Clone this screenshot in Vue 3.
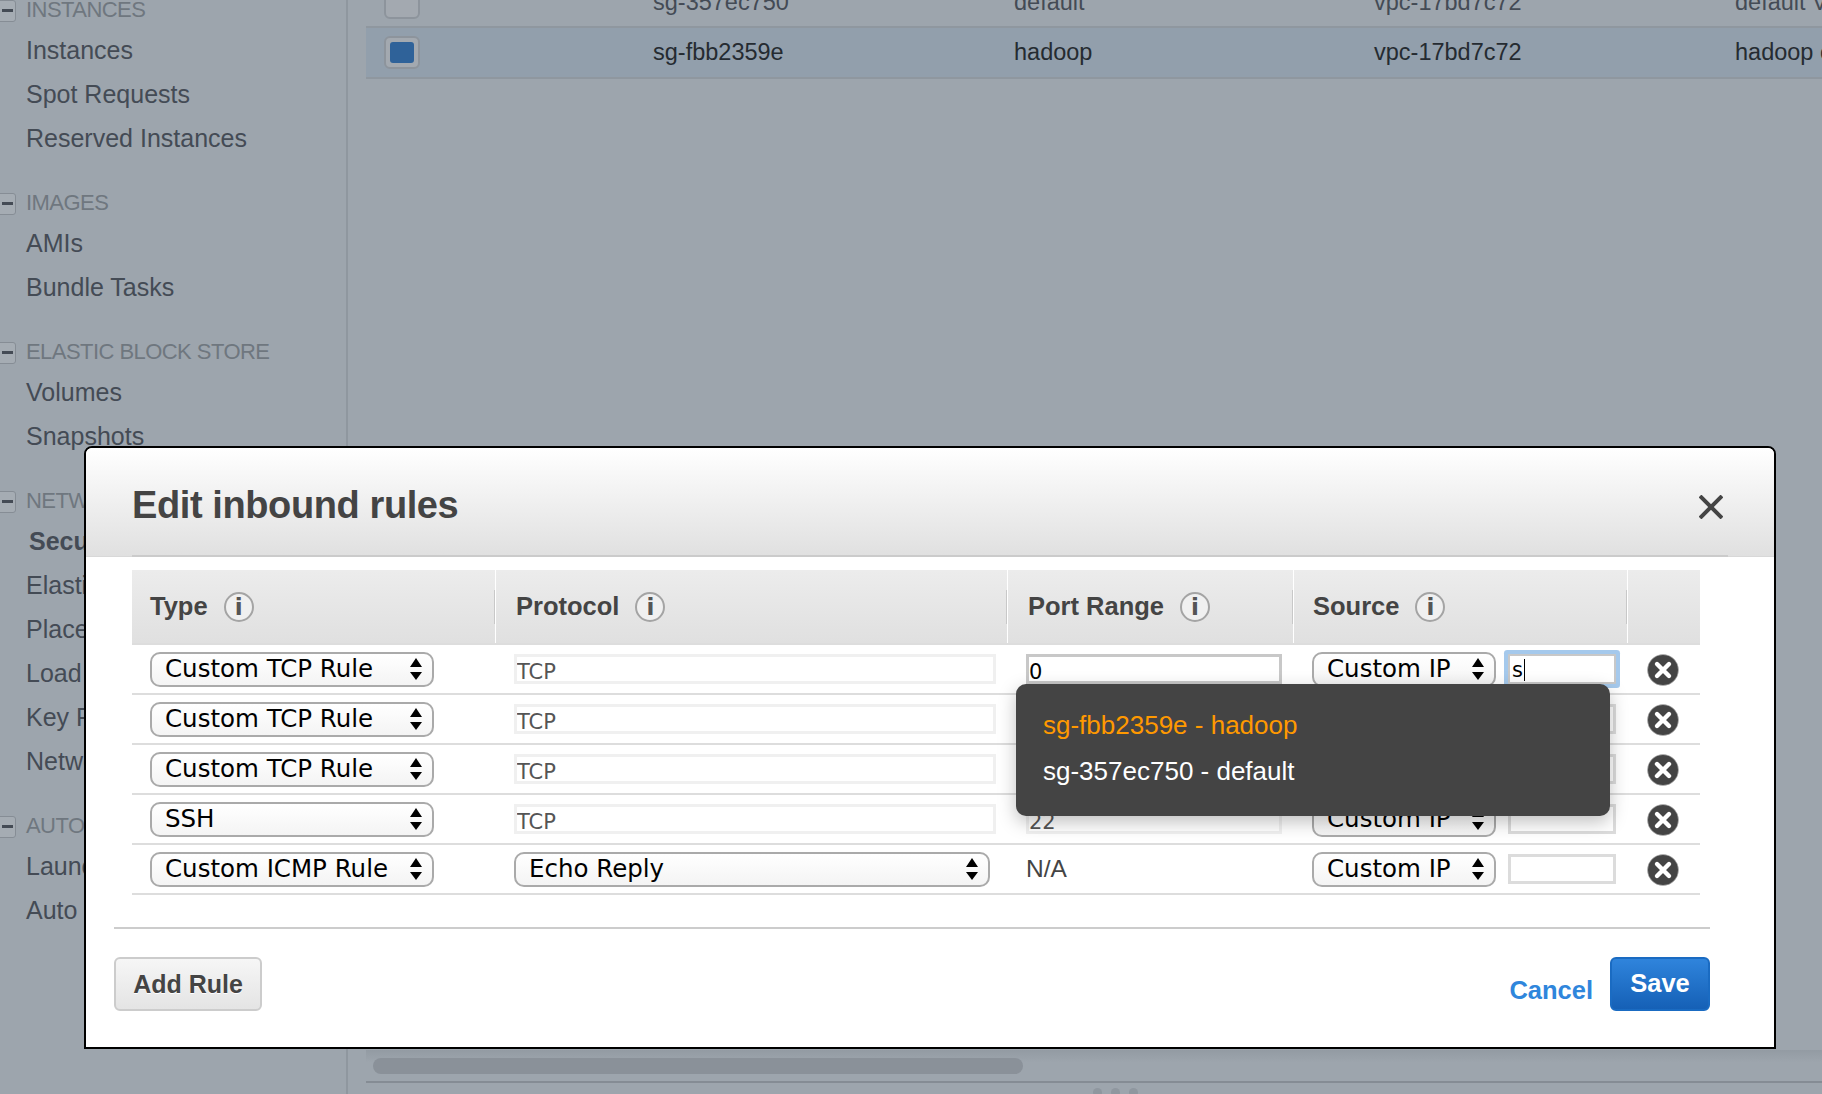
<template>
  <div class="page">
    <aside class="nav">
      <section v-for="group in navGroups" :key="group.title" class="nav-group">
        <h4 class="nav-title"><span class="collapse"></span>{{ group.title }}</h4>
        <a v-for="item in group.items" :key="item" class="nav-item" :class="{ current: item === 'Security Groups' }">{{ item }}</a>
      </section>
    </aside>

    <main class="content">
      <div class="list-row">
        <span class="check"></span>
        <span>sg-357ec750</span><span>default</span><span>vpc-17bd7c72</span><span>default VPC security group</span>
      </div>
      <div class="list-row selected">
        <span class="check"><i></i></span>
        <span>sg-fbb2359e</span><span>hadoop</span><span>vpc-17bd7c72</span><span>hadoop cluster</span>
      </div>
      <div class="scrollbar"><div class="thumb"></div></div>
      <div class="grip"><i></i><i></i><i></i></div>
    </main>

    <div class="modal">
      <header class="modal-head">
        <h2>Edit inbound rules</h2>
        <svg class="close" width="24" height="24" viewBox="0 0 24 24"><path d="M1 1 23 23M23 1 1 23" stroke="#444" stroke-width="4" fill="none" /></svg>
      </header>

      <div class="rules">
        <div class="rule-head">
          <div v-for="col in columns" :key="col" class="th">
            <template v-if="col">
              <span>{{ col }}</span>
              <span class="info">i</span>
            </template>
          </div>
        </div>

        <div v-for="(rule, i) in rules" :key="i" class="rule-row">
          <div class="td">
            <div class="select type">
              <span>{{ rule.type }}</span>
              <svg class="arrows" width="12" height="24" viewBox="0 0 12 24"><path d="M6 1 12 10H0ZM0 15H12L6 23Z" /></svg>
            </div>
          </div>
          <div class="td">
            <div v-if="rule.code" class="select code">
              <span>{{ rule.code }}</span>
              <svg class="arrows" width="12" height="24" viewBox="0 0 12 24"><path d="M6 1 12 10H0ZM0 15H12L6 23Z" /></svg>
            </div>
            <input v-else class="field protocol" :value="rule.protocol" readonly>
          </div>
          <div class="td">
            <span v-if="rule.code" class="plain">N/A</span>
            <input v-else class="field port" :class="{ live: i === 0 }" :value="rule.port" readonly>
          </div>
          <div class="td source">
            <div class="select ip">
              <span>Custom IP</span>
              <svg class="arrows" width="12" height="24" viewBox="0 0 12 24"><path d="M6 1 12 10H0ZM0 15H12L6 23Z" /></svg>
            </div>
            <div v-if="i === 0" class="field cidr focused">s<b class="caret"></b></div>
            <input v-else class="field cidr" readonly>
          </div>
          <div class="td remove">
            <svg width="32" height="32" viewBox="0 0 32 32">
              <circle cx="16" cy="16" r="15.5" fill="#444" stroke="#bbb" stroke-width="0.6" />
              <path d="M10 10 22 22M22 10 10 22" stroke="#fff" stroke-width="4.4" stroke-linecap="round" />
            </svg>
          </div>
        </div>
      </div>

      <footer class="modal-foot">
        <button class="btn add">Add Rule</button>
        <a class="cancel">Cancel</a>
        <button class="btn save">Save</button>
      </footer>

      <ul class="suggest">
        <li class="hit">sg-fbb2359e - hadoop</li>
        <li>sg-357ec750 - default</li>
      </ul>
    </div>
  </div>
</template>

<script setup>
const navGroups = [
  { title: 'INSTANCES', items: ['Instances', 'Spot Requests', 'Reserved Instances'] },
  { title: 'IMAGES', items: ['AMIs', 'Bundle Tasks'] },
  { title: 'ELASTIC BLOCK STORE', items: ['Volumes', 'Snapshots'] },
  { title: 'NETWORK & SECURITY', items: ['Security Groups', 'Elastic IPs', 'Placement Groups', 'Load Balancers', 'Key Pairs', 'Network Interfaces'] },
  { title: 'AUTO SCALING', items: ['Launch Configurations', 'Auto Scaling Groups'] }
]

const columns = ['Type', 'Protocol', 'Port Range', 'Source', '']

const rules = [
  { type: 'Custom TCP Rule', protocol: 'TCP', port: '0' },
  { type: 'Custom TCP Rule', protocol: 'TCP', port: '' },
  { type: 'Custom TCP Rule', protocol: 'TCP', port: '' },
  { type: 'SSH', protocol: 'TCP', port: '22' },
  { type: 'Custom ICMP Rule', code: 'Echo Reply' }
]
</script>

<style>
html, body {
  margin: 0;
  background: #9da5ad;
  overflow: hidden;
}
</style>

<style scoped>
.page {
  position: relative;
  display: flex;
  width: 1822px;
  height: 1094px;
  overflow: hidden;
  background: #9da5ad;
  font-family: "Liberation Sans", Arial, sans-serif;
  color: #444b55;
}

/* sidebar */
.nav {
  flex: 0 0 348px;
  height: 1098px;
  margin-top: -4px;
  border-right: 2px solid #8f979f;
  box-sizing: border-box;
}
.nav-group {
  margin-bottom: 30px;
}
.nav-title {
  position: relative;
  height: 28px;
  line-height: 28px;
  margin: 0 0 3px;
  padding-left: 26px;
  font-size: 22px;
  font-weight: 400;
  letter-spacing: -0.55px;
  color: #6f777f;
}
.collapse {
  position: absolute;
  left: -8px;
  top: 4px;
  width: 22px;
  height: 20px;
  border: 1px solid #868d95;
  border-radius: 3px;
  background: #a5acb3;
}
.collapse::after {
  content: "";
  position: absolute;
  left: 9px;
  right: 2px;
  top: 8px;
  height: 3px;
  background: #444b55;
}
.nav-item {
  display: block;
  height: 44px;
  line-height: 46px;
  padding-left: 26px;
  font-size: 25px;
  white-space: nowrap;
}
.nav-item.current {
  padding-left: 29px;
  font-weight: 700;
}

/* list behind the dialog */
.content {
  flex: 1;
  min-width: 0;
  margin-top: -22px;
  padding-left: 18px;
  display: flex;
  flex-direction: column;
}
.list-row {
  display: grid;
  grid-template-columns: 287px 361px 360px 361px 1fr;
  align-items: center;
  height: 50px;
  box-sizing: border-box;
  border-bottom: 2px solid #8f979f;
  font-size: 23.5px;
  color: #444b55;
  white-space: nowrap;
}
.list-row.selected {
  height: 51px;
  background: #929fac;
  color: #252b31;
}
.check {
  position: relative;
  width: 36px;
  height: 33px;
  margin-left: 18px;
  box-sizing: border-box;
  border: 2px solid #8d949c;
  border-radius: 6px;
  background: #a3a9b0;
}
.check i {
  position: absolute;
  left: 4px;
  top: 4px;
  width: 24px;
  height: 21px;
  border-radius: 3px;
  background: #2f6299;
}
.scrollbar {
  margin-top: auto;
  height: 33px;
  padding-top: 8px;
  box-sizing: border-box;
  background: linear-gradient(#939ba3, #9da5ad 40%);
  border-bottom: 2px solid #858c94;
  margin-bottom: 5px;
}
.thumb {
  width: 650px;
  height: 16px;
  margin-left: 7px;
  border-radius: 8px;
  background: #8a9199;
}
.grip {
  display: flex;
  gap: 9px;
  justify-content: center;
  padding-left: 42px;
  margin-bottom: -3px;
}
.grip i {
  flex: none;
  width: 9px;
  height: 9px;
  border-radius: 50%;
  background: #8f979f;
}

/* dialog */
.modal {
  position: absolute;
  left: 84px;
  top: 446px;
  width: 1692px;
  height: 603px;
  box-sizing: border-box;
  border: 2px solid #000;
  border-radius: 8px 8px 0 0;
  background: #fff;
  color: #444;
}
.modal-head {
  position: relative;
  display: flex;
  align-items: center;
  justify-content: space-between;
  height: 109px;
  box-sizing: border-box;
  padding: 6px 51px 0 46px;
  border-radius: 6px 6px 0 0;
  background: linear-gradient(#fff, #e0e0e0);
  border-bottom: 1px solid #d8d8d8;
}
.modal-head::after {
  content: "";
  position: absolute;
  left: 46px;
  right: 46px;
  bottom: -1px;
  height: 2px;
  background: #cbcbcb;
}
.modal-head h2 {
  margin: 0;
  font-size: 38px;
  font-weight: 700;
  letter-spacing: -0.4px;
}
.close {
  margin-top: 4px;
}

.rules {
  margin: 13px 0 0 46px;
  width: 1568px;
}
.rule-head,
.rule-row {
  display: grid;
  grid-template-columns: 363px 512px 286px 334px 73px;
}
.rule-head {
  height: 73px;
  background: linear-gradient(#ececec, #e0e0e0);
  border-bottom: 2px solid #fff;
}
.th {
  position: relative;
  display: flex;
  align-items: center;
  gap: 16px;
  padding-left: 18px;
  font-size: 25.5px;
  font-weight: 700;
  border-left: 1px solid #fff;
}
.th:first-child {
  border-left: 0;
}
.th + .th::before {
  content: "";
  position: absolute;
  left: -2px;
  top: 20px;
  height: 34px;
  width: 1px;
  background: #c8c8c8;
}
.th + .th {
  padding-left: 20px;
}
.th:nth-child(4) {
  padding-left: 19px;
}
.info {
  flex: none;
  width: 30px;
  height: 30px;
  box-sizing: border-box;
  border: 2px solid #a4a4a4;
  border-radius: 50%;
  background: #f0f0f0;
  text-align: center;
  line-height: 26px;
  font-size: 23px;
  font-weight: 700;
  font-family: "DejaVu Sans", sans-serif;
  color: #555;
}
.rule-row {
  height: 50px;
  box-sizing: border-box;
  border-bottom: 2px solid #ddd;
}
.rule-head + .rule-row {
  box-shadow: 0 -2px 0 #ddd;
}
.td {
  display: flex;
  align-items: center;
  padding-left: 18px;
}
.td + .td {
  padding-left: 19px;
}
.td.source {
  padding-left: 19px;
  gap: 12px;
}
.td.remove {
  padding-left: 20px;
  padding-top: 2px;
}

.select {
  display: flex;
  align-items: center;
  justify-content: space-between;
  height: 35px;
  box-sizing: border-box;
  padding: 0 10px 2px 13px;
  border: 2px solid #aaa;
  border-radius: 10px;
  background: linear-gradient(#fff, #f4f4f4);
  font-family: "DejaVu Sans", sans-serif;
  font-size: 24.5px;
  color: #000;
  white-space: nowrap;
}
.select.type { width: 284px; }
.select.code { width: 476px; }
.select.ip { width: 184px; }
.arrows {
  flex: none;
  margin-top: 2px;
  fill: #000;
}
.field {
  height: 30px;
  box-sizing: border-box;
  padding: 6px 0 0 0;
  border: 3px solid #f0f0f0;
  outline: none;
  border-radius: 0;
  background: #fff;
  font-family: "DejaVu Sans", sans-serif;
  font-size: 21px;
  color: #555;
}
.field.protocol { width: 482px; }
.field.port { width: 256px; }
.field.port.live {
  border-color: #c8c8c8;
  color: #000;
}
.field.cidr {
  width: 108px;
  border-color: #dcdcdc;
}
.field.cidr.focused {
  display: flex;
  align-items: center;
  padding: 2px 0 0 2px;
  border: 2px solid #c8c8c8;
  border-radius: 1px;
  color: #000;
  box-shadow: 0 0 0 4px #a5c9ec;
}
.caret {
  display: inline-block;
  width: 1px;
  height: 22px;
  margin-left: 1px;
  background: #000;
}
.plain {
  font-size: 24.5px;
  color: #444;
}

.modal-foot {
  display: flex;
  align-items: flex-start;
  margin: 32px 64px 0 28px;
  padding-top: 28px;
  border-top: 2px solid #ccc;
}
.btn {
  height: 54px;
  box-sizing: border-box;
  border-radius: 6px;
  font-family: "Liberation Sans", Arial, sans-serif;
  font-size: 25.5px;
  font-weight: 700;
}
.add {
  width: 148px;
  border: 2px solid #ccc;
  background: linear-gradient(#f6f6f6, #e4e4e4);
  color: #444;
  font-size: 25px;
  text-shadow: 0 1px 0 #fff;
}
.cancel {
  margin: 19px 17px 0 auto;
  font-size: 25.5px;
  font-weight: 700;
  color: #2f86dc;
}
.save {
  width: 100px;
  border: 2px solid #1a6bc2;
  background: linear-gradient(#2f84dc, #1560b6);
  color: #fff;
  padding-bottom: 2px;
}

.suggest {
  position: absolute;
  left: 930px;
  top: 236px;
  width: 594px;
  height: 132px;
  box-sizing: border-box;
  margin: 0;
  padding: 18px 0 0 27px;
  list-style: none;
  border-radius: 10px;
  background: #444;
  color: #fff;
  font-size: 26px;
  box-shadow: 0 6px 18px rgba(0, 0, 0, 0.25);
}
.suggest li {
  height: 46px;
  line-height: 46px;
}
.suggest .hit {
  color: #ff9900;
}
</style>
